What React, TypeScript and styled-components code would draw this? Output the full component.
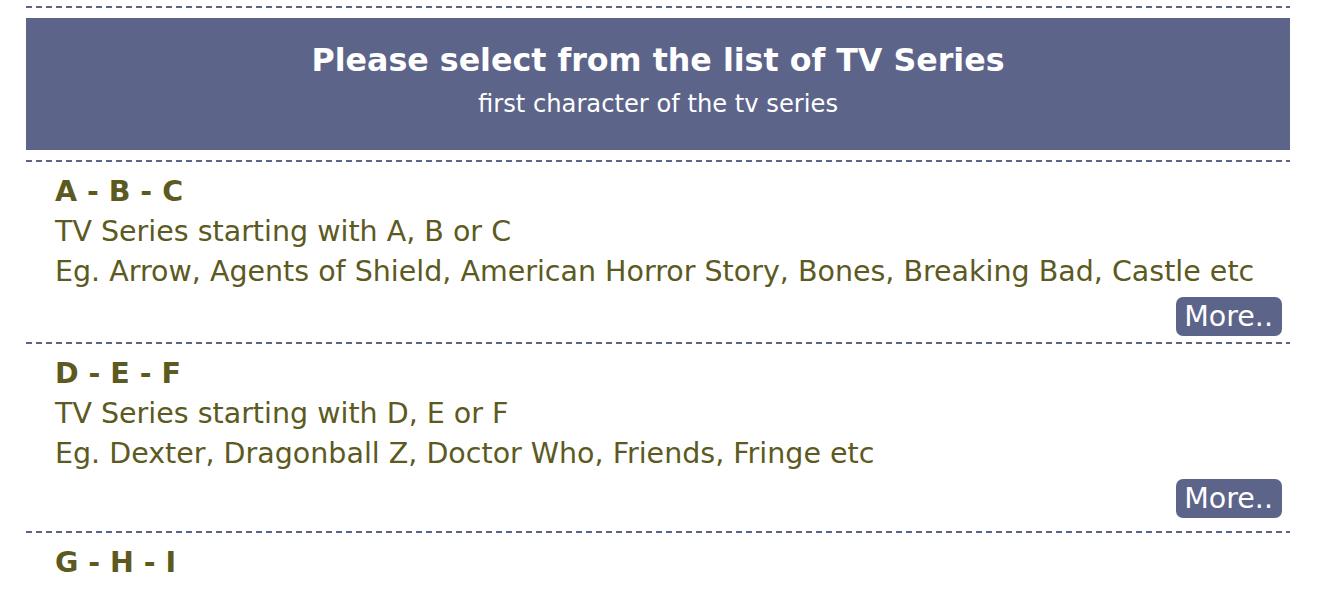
import React from "react";
import styled, { createGlobalStyle } from "styled-components";

const Global = createGlobalStyle`
  html, body { margin: 0; padding: 0; background: #ffffff; }
  body { font-family: "DejaVu Sans", Verdana, sans-serif; }
`;

const Page = styled.div`
  width: 1264px;
  margin-left: 26px;
  padding-top: 6px;
`;

const Divider = styled.div`
  height: 2px;
  background: repeating-linear-gradient(
    to right,
    #5d648a 0,
    #5d648a 6px,
    transparent 6px,
    transparent 10px
  );
`;

const Header = styled.header`
  margin: 10px 0;
  height: 132px;
  background: #5d648a;
  color: #ffffff;
  display: flex;
  flex-direction: column;
  align-items: center;
  padding-top: 23px;
  box-sizing: border-box;
`;

const Title = styled.h1`
  margin: 0;
  font-size: 31.7px;
  font-weight: bold;
  line-height: 38px;
`;

const Subtitle = styled.div`
  margin-top: 10px;
  font-size: 24.2px;
  line-height: 30px;
`;

const Section = styled.section<{ $tail: number }>`
  padding: 10px 8px ${(p) => p.$tail}px 29px;
  color: #5c5a1f;
  display: flex;
  flex-direction: column;
`;

const Heading = styled.h2`
  margin: 0;
  font-size: 28.5px;
  font-weight: bold;
  line-height: 40px;
`;

const Line = styled.div`
  font-size: 28.5px;
  line-height: 40px;
`;

const MoreRow = styled.div`
  display: flex;
  justify-content: flex-end;
  margin-top: 5px;
`;

const MoreButton = styled.button`
  background: #5d648a;
  color: #ffffff;
  border: none;
  border-radius: 7px;
  font-family: "DejaVu Sans", Verdana, sans-serif;
  font-size: 28.5px;
  line-height: 39px;
  height: 39px;
  padding: 0 9px 0 8px;
  cursor: pointer;
`;

const sections = [
  {
    heading: "A - B - C",
    letters: "A, B or C",
    eg: "Arrow, Agents of Shield, American Horror Story, Bones, Breaking Bad, Castle etc",
    tail: 6,
  },
  {
    heading: "D - E - F",
    letters: "D, E or F",
    eg: "Dexter, Dragonball Z, Doctor Who, Friends, Fringe etc",
    tail: 13,
  },
];

export default function App() {
  return (
    <>
      <Global />
      <Page>
        <Divider />
        <Header>
          <Title>Please select from the list of TV Series</Title>
          <Subtitle>first character of the tv series</Subtitle>
        </Header>
        {sections.map((s) => (
          <React.Fragment key={s.heading}>
            <Divider />
            <Section $tail={s.tail}>
              <Heading>{s.heading}</Heading>
              <Line>TV Series starting with {s.letters}</Line>
              <Line>Eg. {s.eg}</Line>
              <MoreRow>
                <MoreButton>More..</MoreButton>
              </MoreRow>
            </Section>
          </React.Fragment>
        ))}
        <Divider />
        <Section $tail={14}>
          <Heading>G - H - I</Heading>
        </Section>
      </Page>
    </>
  );
}
